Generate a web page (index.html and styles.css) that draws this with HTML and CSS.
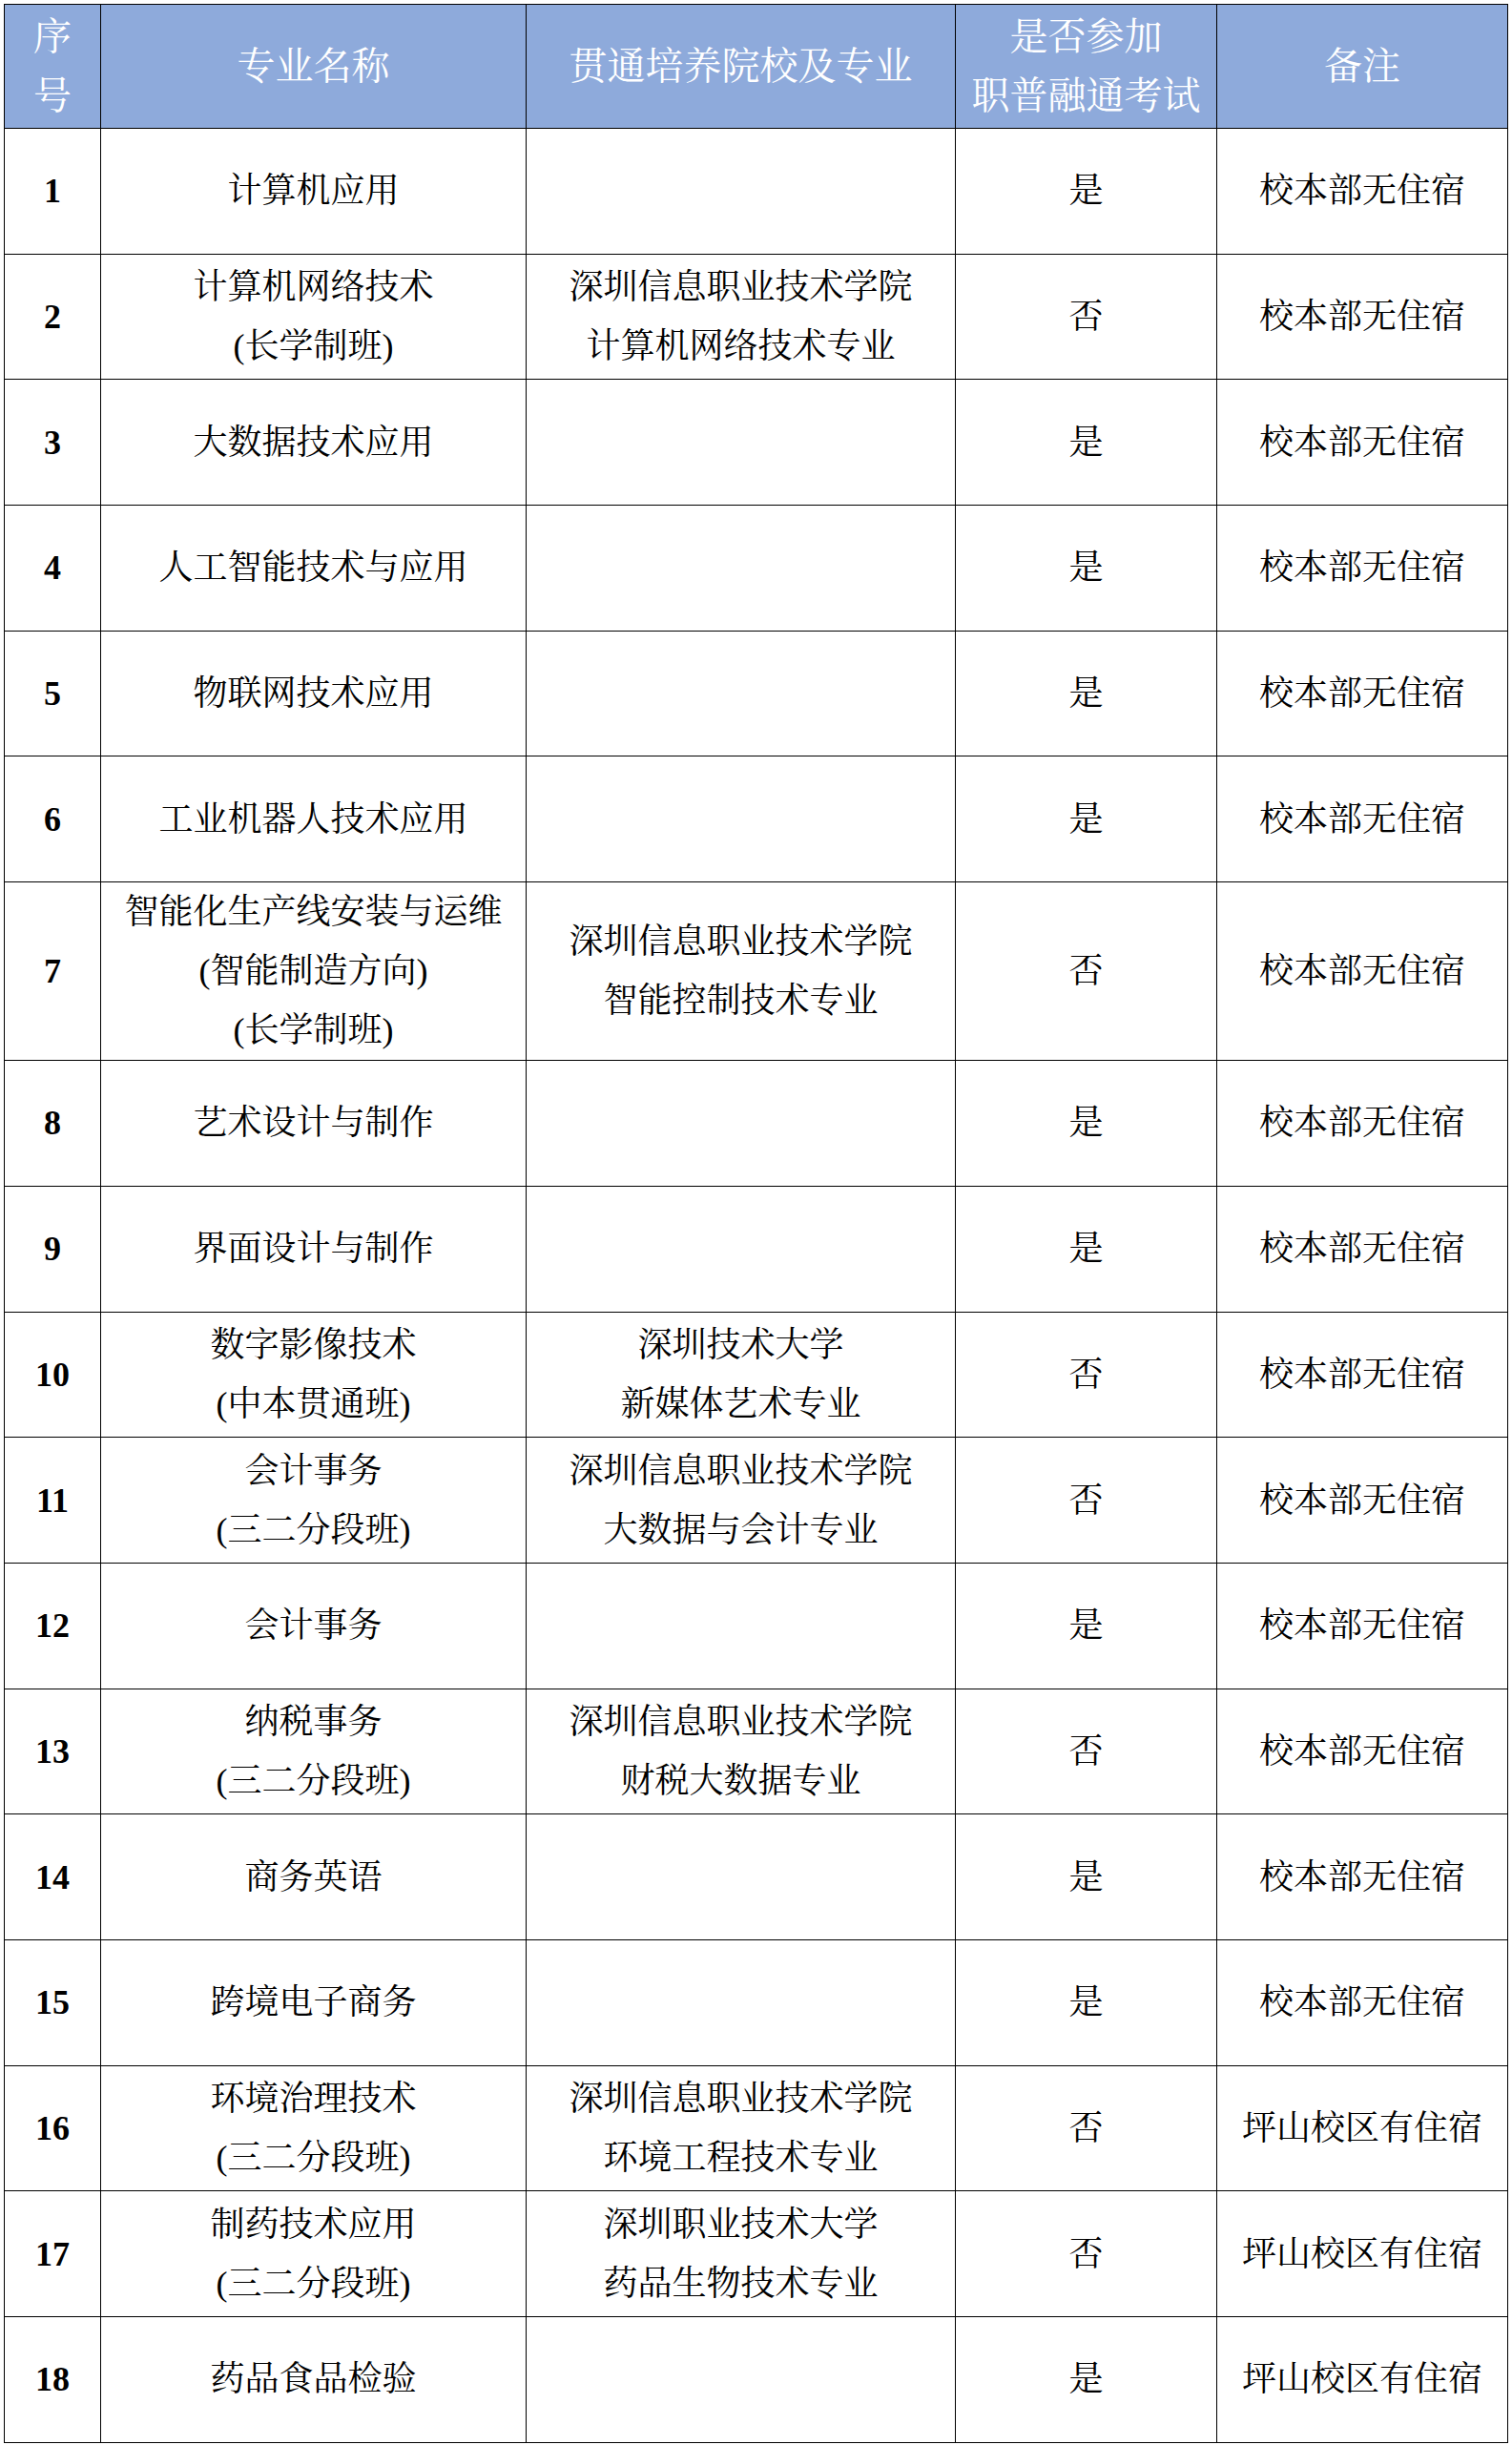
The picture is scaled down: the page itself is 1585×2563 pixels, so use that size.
FILE: index.html
```html
<!DOCTYPE html>
<html lang="zh-CN">
<head>
<meta charset="utf-8">
<title>专业列表</title>
<link rel="stylesheet" href="styles.css">
</head>
<body>
<div class="page">
<table class="majors">
<colgroup>
<col class="c-no"><col class="c-name"><col class="c-school"><col class="c-exam"><col class="c-note">
</colgroup>
<thead>
<tr class="head">
<th>序<br>号</th>
<th>专业名称</th>
<th>贯通培养院校及专业</th>
<th>是否参加<br>职普融通考试</th>
<th>备注</th>
</tr>
</thead>
<tbody>
<tr><td class="no">1</td><td>计算机应用</td><td></td><td>是</td><td>校本部无住宿</td></tr>
<tr><td class="no">2</td><td>计算机网络技术<br>(长学制班)</td><td>深圳信息职业技术学院<br>计算机网络技术专业</td><td>否</td><td>校本部无住宿</td></tr>
<tr><td class="no">3</td><td>大数据技术应用</td><td></td><td>是</td><td>校本部无住宿</td></tr>
<tr><td class="no">4</td><td>人工智能技术与应用</td><td></td><td>是</td><td>校本部无住宿</td></tr>
<tr><td class="no">5</td><td>物联网技术应用</td><td></td><td>是</td><td>校本部无住宿</td></tr>
<tr><td class="no">6</td><td>工业机器人技术应用</td><td></td><td>是</td><td>校本部无住宿</td></tr>
<tr class="tall"><td class="no">7</td><td>智能化生产线安装与运维<br>(智能制造方向)<br>(长学制班)</td><td>深圳信息职业技术学院<br>智能控制技术专业</td><td>否</td><td>校本部无住宿</td></tr>
<tr><td class="no">8</td><td>艺术设计与制作</td><td></td><td>是</td><td>校本部无住宿</td></tr>
<tr><td class="no">9</td><td>界面设计与制作</td><td></td><td>是</td><td>校本部无住宿</td></tr>
<tr><td class="no">10</td><td>数字影像技术<br>(中本贯通班)</td><td>深圳技术大学<br>新媒体艺术专业</td><td>否</td><td>校本部无住宿</td></tr>
<tr><td class="no">11</td><td>会计事务<br>(三二分段班)</td><td>深圳信息职业技术学院<br>大数据与会计专业</td><td>否</td><td>校本部无住宿</td></tr>
<tr><td class="no">12</td><td>会计事务</td><td></td><td>是</td><td>校本部无住宿</td></tr>
<tr><td class="no">13</td><td>纳税事务<br>(三二分段班)</td><td>深圳信息职业技术学院<br>财税大数据专业</td><td>否</td><td>校本部无住宿</td></tr>
<tr><td class="no">14</td><td>商务英语</td><td></td><td>是</td><td>校本部无住宿</td></tr>
<tr><td class="no">15</td><td>跨境电子商务</td><td></td><td>是</td><td>校本部无住宿</td></tr>
<tr><td class="no">16</td><td>环境治理技术<br>(三二分段班)</td><td>深圳信息职业技术学院<br>环境工程技术专业</td><td>否</td><td>坪山校区有住宿</td></tr>
<tr><td class="no">17</td><td>制药技术应用<br>(三二分段班)</td><td>深圳职业技术大学<br>药品生物技术专业</td><td>否</td><td>坪山校区有住宿</td></tr>
<tr><td class="no">18</td><td>药品食品检验</td><td></td><td>是</td><td>坪山校区有住宿</td></tr>
</tbody>
</table>
</div>
</body>
</html>
```
FILE: styles.css
```css
html, body {
  margin: 0;
  padding: 0;
  background: #ffffff;
}
.page {
  padding: 4px 0 0 4px;
}
.majors {
  border-collapse: collapse;
  table-layout: fixed;
  width: 1576px;
  font-family: "Liberation Serif", "Noto Serif CJK SC", "Noto Sans CJK SC", serif;
  color: #000000;
}
.c-no { width: 101px; }
.c-name { width: 446px; }
.c-school { width: 450px; }
.c-exam { width: 274px; }
.c-note { width: 305px; }
.majors th,
.majors td {
  border: 1px solid #000000;
  padding: 0;
  text-align: center;
  vertical-align: middle;
}
.head {
  height: 130px;
  background: #8eaadb;
}
.head th {
  color: #ffffff;
  font-weight: normal;
  font-size: 40px;
  line-height: 62px;
}
.majors tbody tr {
  height: 131.7px;
}
.majors tbody tr.tall {
  height: 187px;
}
.majors td {
  font-size: 36px;
  line-height: 62px;
}
.majors td.no {
  font-weight: bold;
  font-size: 36px;
}
```
